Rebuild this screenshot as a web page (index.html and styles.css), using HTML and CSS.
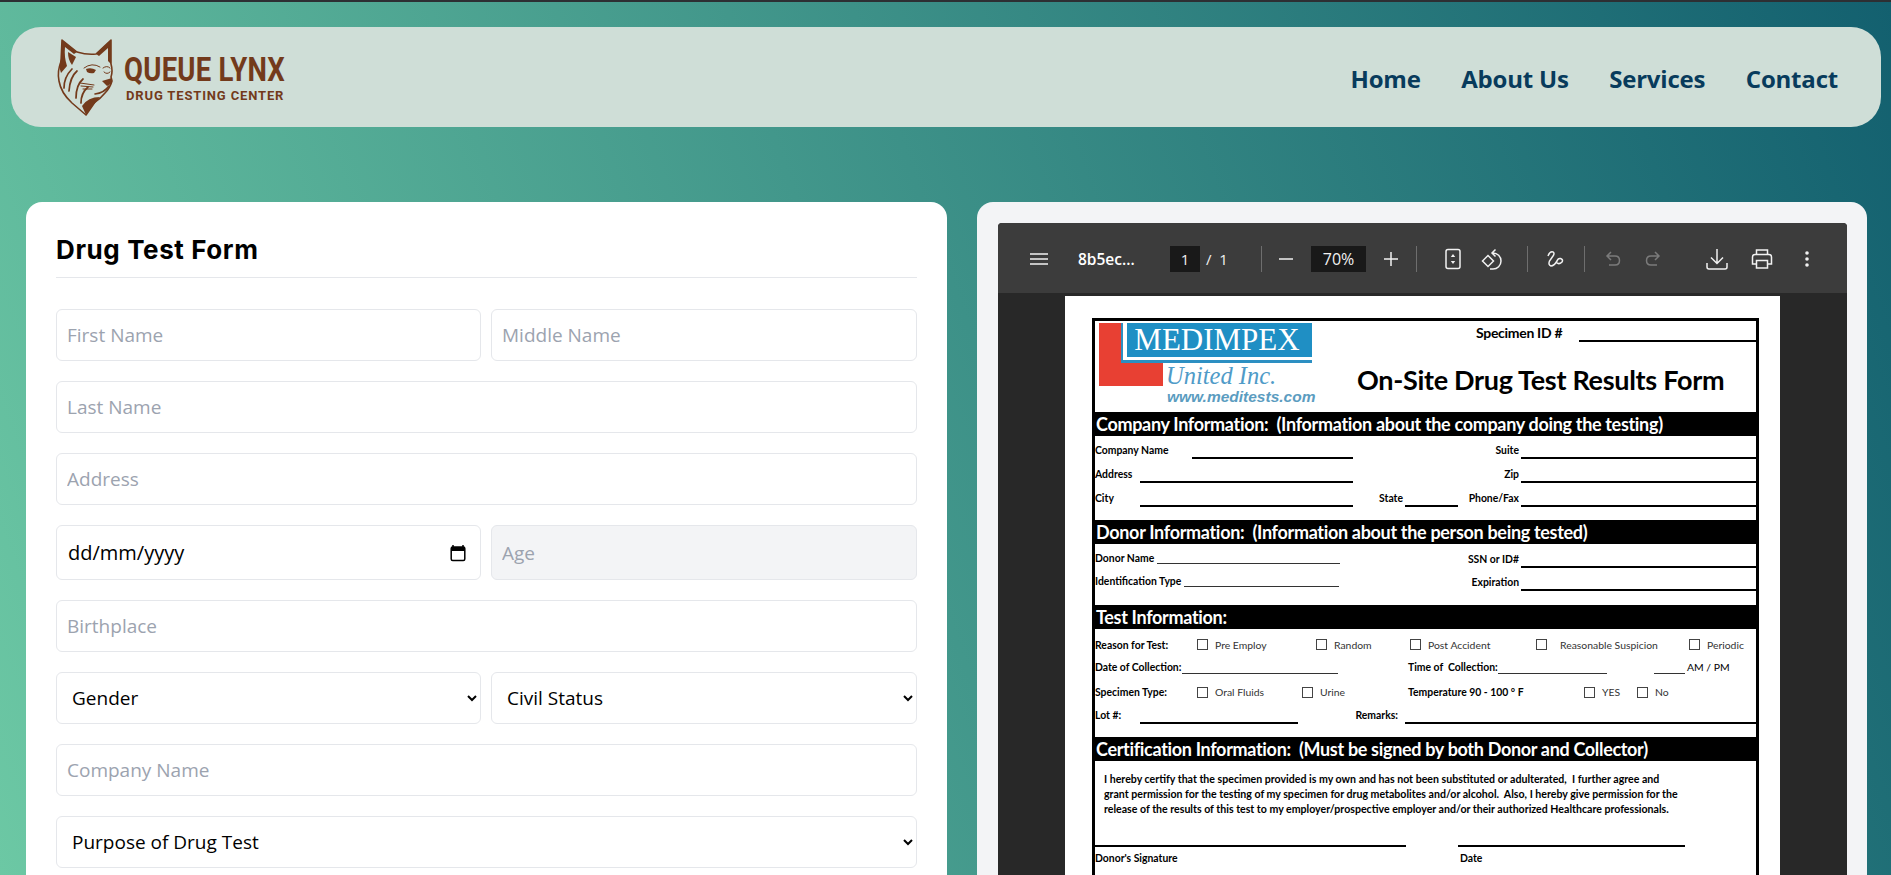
FILE: index.html
```html
<!DOCTYPE html>
<html lang="en">
<head>
    <meta charset="UTF-8">
    <meta name="viewport" content="width=device-width, initial-scale=1.0">
    <title>Queue Lynx Drug Testing Center</title>
    <link rel="stylesheet" href="styles.css">
</head>
<body>
    <header class="navbar">
        <a class="brand" href="#">
            <svg class="brand-mark" viewBox="0 0 70 86" width="70" height="86">
                <path class="lynx-line" d="M12 5 L27 17 Q37 20 46 19 L61 5 L61 29 Q63 36 61 42 L62 46 Q60 53 55 58 Q50 64 45 67 L36 80 L22 68 Q11 58 9 46 Q7 36 11 27 Z"/>
                <path class="lynx-fill" d="M12 5 L27 17 L24 19 L15 12 Q14 22 17 31 L11 38 Q8 30 11 24 Z"/>
                <path class="lynx-fill" d="M18 17 L26 22 L22 30 Q18 25 18 17 Z"/>
                <path class="lynx-fill" d="M61 5 L61 29 L58 26 L58 13 L49 21 L46 19 Z"/>
                <path class="lynx-stroke" d="M27 36 Q20 42 19 56 M22 34 Q14 42 14 53 M33 44 Q26 50 26 63 M38 52 Q31 58 31 68"/>
                <path class="lynx-stroke thin" d="M30 48 L44 50 M31 51 L43 52 M33 54 L42 54"/>
                <path class="lynx-fill" d="M36 34 Q41 32 46 35 L44 38 Q40 39 37 37 Z"/>
                <path class="lynx-stroke thin" d="M34 33 Q42 27 50 32 M53 33 Q57 30 60 33 M54 37 Q57 40 60 37"/>
                <path class="lynx-fill" d="M52 46 L62 43 L61 49 L57 51 Z"/>
                <path class="lynx-stroke" d="M45 59 Q54 58 59 51"/>
                <path class="lynx-fill" d="M32 71 Q38 62 50 62 Q46 68 42 71 L36 80 Z"/>
            </svg>
            <span class="brand-text">
                <span class="brand-name">QUEUE LYNX</span>
                <span class="brand-sub">DRUG TESTING CENTER</span>
            </span>
        </a>
        <nav class="nav-links">
            <a href="#">Home</a>
            <a href="#">About Us</a>
            <a href="#">Services</a>
            <a href="#">Contact</a>
        </nav>
    </header>

    <main class="content">
        <section class="card form-card">
            <h1 class="form-title">Drug Test Form</h1>
            <form class="form-fields">
                <div class="field-row">
                    <input class="field" type="text" placeholder="First Name">
                    <input class="field" type="text" placeholder="Middle Name">
                </div>
                <input class="field" type="text" placeholder="Last Name">
                <input class="field" type="text" placeholder="Address">
                <div class="field-row">
                    <div class="field date-field">
                        <span>dd/mm/yyyy</span>
                        <svg viewBox="0 0 16 18" width="16" height="18">
                            <path d="M3 1v2M13 1v2" class="cal-line"/>
                            <rect x="1.2" y="3" width="13.6" height="13.5" rx="1.5" class="cal-line"/>
                            <rect x="1.2" y="3" width="13.6" height="4" class="cal-top"/>
                        </svg>
                    </div>
                    <input class="field field-disabled tall" type="text" placeholder="Age" disabled>
                </div>
                <input class="field" type="text" placeholder="Birthplace">
                <div class="field-row">
                    <select class="field select"><option>Gender</option></select>
                    <select class="field select"><option>Civil Status</option></select>
                </div>
                <input class="field" type="text" placeholder="Company Name">
                <select class="field select"><option>Purpose of Drug Test</option></select>
            </form>
        </section>

        <section class="card preview-card">
            <div class="viewer">
                <div class="toolbar">
                    <button class="tb-btn tb-menu" type="button">
                        <svg viewBox="0 0 18 14" width="18" height="14"><path d="M0 2h18M0 7h18M0 12h18"/></svg>
                    </button>
                    <span class="tb-title">8b5ec...</span>
                    <span class="tb-box tb-page">1</span>
                    <span class="tb-count">/&nbsp;&nbsp;1</span>
                    <span class="tb-sep"></span>
                    <button class="tb-btn tb-minus" type="button">
                        <svg viewBox="0 0 14 14" width="14" height="14"><path d="M0 7h14"/></svg>
                    </button>
                    <span class="tb-box tb-zoom">70%</span>
                    <button class="tb-btn tb-plus" type="button">
                        <svg viewBox="0 0 14 14" width="14" height="14"><path d="M0 7h14M7 0v14"/></svg>
                    </button>
                    <span class="tb-sep tb-sep-a"></span>
                    <button class="tb-btn tb-fit" type="button">
                        <svg viewBox="0 0 16 22" width="16" height="22">
                            <rect x="1" y="1.5" width="14" height="19" rx="2"/>
                            <path class="solid" d="M8 6l2.2 3h-4.4zM8 16l-2.2-3h4.4z"/>
                        </svg>
                    </button>
                    <button class="tb-btn tb-rotate" type="button">
                        <svg viewBox="0 0 22 22" width="22" height="22">
                            <path d="M1.5 13l5.5-5.5 5.5 5.500-5.500 5.500z"/>
                            <path d="M14.5 1.5L11 5l3.5 3.5M11 5h1a8 8 0 0 1 0 16h-3"/>
                        </svg>
                    </button>
                    <span class="tb-sep tb-sep-b"></span>
                    <button class="tb-btn tb-draw" type="button">
                        <svg viewBox="0 0 18 18" width="18" height="18">
                            <path d="M1 6Q3 1 6 2q2 1 0 4L2.5 11Q1 15 4 16q3 0 6-5 1-3 3.5-2.500 3 1 1.500 3.500-3 3-5.500 .5"/>
                        </svg>
                    </button>
                    <span class="tb-sep tb-sep-c"></span>
                    <button class="tb-btn tb-undo dim" type="button">
                        <svg viewBox="0 0 16 16" width="16" height="16"><path d="M6 1L2 5l4 4M2 5h8q4.500 0 4.500 4.500T10 14H4"/></svg>
                    </button>
                    <button class="tb-btn tb-redo dim" type="button">
                        <svg viewBox="0 0 16 16" width="16" height="16"><path d="M10 1l4 4-4 4M14 5H6Q1.500 5 1.500 9.500T6 14h6"/></svg>
                    </button>
                    <button class="tb-btn tb-save" type="button">
                        <svg viewBox="0 0 22 22" width="22" height="22"><path d="M11 1v14M5 9.500l6 6 6-6M1 15v4q0 2 2 2h16q2 0 2-2v-4"/></svg>
                    </button>
                    <button class="tb-btn tb-print" type="button">
                        <svg viewBox="0 0 22 20" width="22" height="20"><path d="M5.500 5.500V1h11v4.500M5.500 15H1.500V8q0-2.500 2.500-2.500h14q2.500 0 2.500 2.500v7h-4M5.500 11.500h11V19h-11z"/></svg>
                    </button>
                    <button class="tb-btn tb-more" type="button">
                        <svg viewBox="0 0 4 16" width="4" height="16"><circle class="solid" cx="2" cy="2" r="1.8"/><circle class="solid" cx="2" cy="8" r="1.8"/><circle class="solid" cx="2" cy="14" r="1.8"/></svg>
                    </button>
                </div>

                <div class="pdf-page">
                    <div class="doc">
                        <div class="doc-head">
                            <div class="med-logo">
                                <span class="med-red"></span>
                                <span class="med-rule"></span>
                                <span class="med-blue">MEDIMPEX</span>
                                <span class="med-united">United Inc.</span>
                                <span class="med-url">www.meditests.com</span>
                            </div>
                            <div class="doc-head-right">
                                <div class="specimen-row">
                                    <span class="specimen-label">Specimen ID #</span>
                                    <span class="line"></span>
                                </div>
                                <div class="doc-title">On-Site Drug Test Results Form</div>
                            </div>
                        </div>

                        <div class="band">Company Information:  (Information about the company doing the testing)</div>
                        <div class="row row-h23 cols-company-1">
                            <span class="lbl">Company Name</span><span class="line"></span><span class="lbl right">Suite</span><span class="line"></span>
                        </div>
                        <div class="row cols-company-2">
                            <span class="lbl">Address</span><span class="line"></span><span class="lbl right">Zip</span><span class="line"></span>
                        </div>
                        <div class="row cols-company-3">
                            <span class="lbl">City</span><span class="line"></span><span class="lbl right">State</span><span class="line"></span><span class="lbl right">Phone/Fax</span><span class="line"></span>
                        </div>

                        <div class="band band-gap">Donor Information:  (Information about the person being tested)</div>
                        <div class="row cols-donor-1">
                            <span class="lbl up">Donor Name</span><span class="line thin up"></span><span class="lbl right">SSN or ID#</span><span class="line"></span>
                        </div>
                        <div class="row row-h23 cols-donor-2">
                            <span class="lbl up">Identification Type</span><span class="line thin up"></span><span class="lbl right">Expiration</span><span class="line"></span>
                        </div>

                        <div class="band band-gap-14">Test Information:</div>
                        <div class="row row-h26 cols-reason">
                            <span class="lbl mid">Reason for Test:</span>
                            <span class="check"><i></i>Pre Employ</span>
                            <span class="check"><i></i>Random</span>
                            <span class="check"><i></i>Post Accident</span>
                            <span class="check wide"><i></i>Reasonable Suspicion</span>
                            <span class="check"><i></i>Periodic</span>
                        </div>
                        <div class="row row-h19 cols-collect">
                            <span class="lbl">Date of Collection:</span><span class="line thin"></span><span></span>
                            <span class="lbl">Time of  Collection:</span><span class="line thin"></span><span></span>
                            <span class="line thin"></span><span class="lbl plain ampm">AM / PM</span>
                        </div>
                        <div class="row row-h29 cols-specimen">
                            <span class="lbl mid">Specimen Type:</span>
                            <span class="check"><i></i>Oral Fluids</span>
                            <span class="check"><i></i>Urine</span>
                            <span class="lbl mid">Temperature 90 - 100 ° F</span>
                            <span class="check"><i></i>YES</span>
                            <span class="check"><i></i>No</span>
                        </div>
                        <div class="row row-h21 cols-lot">
                            <span class="lbl">Lot #:</span><span class="line"></span><span class="lbl right pad7">Remarks:</span><span class="line"></span>
                        </div>

                        <div class="band band-gap">Certification Information:  (Must be signed by both Donor and Collector)</div>
                        <p class="cert">I hereby certify that the specimen provided is my own and has not been substituted or adulterated,  I further agree and
grant permission for the testing of my specimen for drug metabolites and/or alcohol.  Also, I hereby give permission for the
release of the results of this test to my employer/prospective employer and/or their authorized Healthcare professionals.</p>
                        <div class="row row-h31 cols-sign">
                            <span class="line"></span><span></span><span class="line"></span>
                        </div>
                        <div class="row row-h19 row-sign-labels cols-sign">
                            <span class="lbl mid">Donor's Signature</span><span></span><span class="lbl mid date-lbl">Date</span>
                        </div>
                    </div>
                </div>
            </div>
        </section>
    </main>
</body>
</html>
```

FILE: styles.css
```css
* {
    box-sizing: border-box;
}
html, body {
    height: 875px;
    overflow: hidden;
}
body {
    margin: 0;
    border-top: 2px solid #2d2f33;
    background: linear-gradient(70deg, #6cc8a4 0%, #13606f 100%);
    font-family: "Open Sans", "Noto Sans", sans-serif;
}

/* navbar */
.navbar {
    display: flex;
    align-items: center;
    justify-content: space-between;
    height: 100px;
    margin: 25px 10px 0 11px;
    padding: 0 43px 0 39px;
    background: #cfded7;
    border-radius: 30px;
}
.brand {
    display: flex;
    align-items: center;
    text-decoration: none;
    color: #733a1b;
}
.brand-mark {
    margin-top: 1px;
}
.lynx-line {
    fill: none;
    stroke: #733a1b;
    stroke-width: 1.6;
    stroke-linejoin: round;
}
.lynx-fill {
    fill: #733a1b;
}
.lynx-stroke {
    fill: none;
    stroke: #733a1b;
    stroke-width: 1.7;
    stroke-linecap: round;
}
.lynx-stroke.thin {
    stroke-width: 1;
}
.brand-text {
    display: flex;
    flex-direction: column;
    margin-left: 4px;
}
.brand-name {
    font-family: "Roboto", sans-serif;
    font-weight: 700;
    font-size: 34px;
    line-height: 34px;
    letter-spacing: 0.3px;
    white-space: nowrap;
    transform: scaleX(0.81);
    transform-origin: left center;
}
.brand-sub {
    font-family: "Roboto", sans-serif;
    font-weight: 700;
    font-size: 13px;
    line-height: 15px;
    letter-spacing: 0.85px;
    margin: 2px 0 0 2px;
}
.nav-links {
    display: flex;
    gap: 40.5px;
    margin-top: 2px;
}
.nav-links a {
    font-size: 24px;
    font-weight: 700;
    letter-spacing: -0.2px;
    color: #083b5c;
    text-decoration: none;
}

/* two columns */
.content {
    display: grid;
    grid-template-columns: 921px 890px;
    gap: 30px;
    padding: 75px 24px 0 26px;
}
.card {
    border-radius: 16px;
    height: 800px;
}
.form-card {
    background: #fff;
    padding: 31px 30px 30px;
}
.form-title {
    margin: 0 0 31px;
    padding-bottom: 10px;
    border-bottom: 1px solid #e5e7eb;
    font-family: "Inter", sans-serif;
    font-size: 26px;
    font-weight: 700;
    line-height: 34px;
    letter-spacing: 0.6px;
    color: #000;
}
.form-fields {
    display: flex;
    flex-direction: column;
    gap: 20px;
}
.field-row {
    display: grid;
    grid-template-columns: 425px 1fr;
    gap: 10px;
}
.field {
    width: 100%;
    height: 52px;
    padding: 0 10px;
    border: 1px solid #e5e7eb;
    border-radius: 6px;
    background: #fff;
    color: #000;
    font-family: inherit;
    font-size: 19px;
}
.field::placeholder {
    color: #9ca3af;
    opacity: 1;
}
.field-disabled {
    background: #f3f4f6;
}
.tall {
    height: 55px;
}
.date-field {
    display: flex;
    align-items: center;
    justify-content: space-between;
    height: 55px;
    padding: 0 14px 0 11px;
    font-size: 20px;
}
.cal-line {
    fill: none;
    stroke: #000;
    stroke-width: 1.5;
}
.cal-top {
    fill: #000;
}
.select {
    padding-left: 11px;
}

/* pdf viewer */
.preview-card {
    background: #f3f4f6;
    padding: 21px 20px 0 21px;
}
.viewer {
    background: #282828;
    border-radius: 4px 4px 0 0;
    height: 780px;
    overflow: hidden;
}
.toolbar {
    display: flex;
    align-items: center;
    height: 70px;
    padding: 2px 0 0 25px;
    background: #3c3c3c;
    color: #f1f1f1;
    font-family: "Open Sans", sans-serif;
    font-size: 15px;
}
.tb-btn {
    display: flex;
    align-items: center;
    justify-content: center;
    width: 32px;
    height: 32px;
    padding: 0;
    border: 0;
    background: none;
}
.tb-btn svg {
    fill: none;
    stroke: #f1f1f1;
    stroke-width: 1.5;
}
.tb-btn svg .solid {
    fill: #f1f1f1;
    stroke: none;
}
.tb-btn.dim svg {
    stroke: #7b7b7b;
}
.tb-title {
    width: 92px;
    margin-left: 23px;
    font-size: 15.5px;
    font-weight: 600;
    color: #fff;
}
.tb-box {
    height: 26px;
    line-height: 26px;
    background: #191919;
    text-align: center;
}
.tb-page {
    width: 30px;
}
.tb-count {
    width: 61px;
    padding-left: 6px;
}
.tb-zoom {
    width: 55px;
    margin-left: 9px;
    font-size: 16px;
}
.tb-sep {
    width: 1px;
    height: 26px;
    background: #6e6e6e;
}
.tb-minus { margin-left: 8px; }
.tb-plus { margin-left: 9px; }
.tb-sep-a { margin-left: 9px; }
.tb-fit { margin-left: 20px; }
.tb-rotate { margin-left: 7px; }
.tb-sep-b { margin-left: 19px; }
.tb-draw { margin-left: 12px; }
.tb-sep-c { margin-left: 12px; }
.tb-undo { margin-left: 12px; }
.tb-redo { margin-left: 8px; }
.tb-save { margin-left: 32px; }
.tb-print { margin-left: 13px; }
.tb-more { margin-left: 13px; }

/* the scanned form */
.pdf-page {
    width: 715px;
    height: 700px;
    margin: 3px auto 0;
    padding: 22px 0 0 27px;
    background: #fff;
}
.doc {
    width: 667px;
    height: 700px;
    border: 3px solid #000;
    border-bottom: 0;
    color: #000;
    font-family: "Lato", "Liberation Sans", sans-serif;
    font-size: 10.4px;
}
.doc-head {
    display: flex;
    height: 91px;
}
.med-logo {
    position: relative;
    flex: none;
    width: 223px;
    height: 84px;
    margin: 2px 0 0 4px;
    color: #4f9bc8;
}
.med-red {
    position: absolute;
    left: 0;
    top: 0;
    width: 64px;
    height: 63px;
    background: #e84033;
    clip-path: polygon(0 0, 22px 0, 22px 40px, 64px 40px, 64px 63px, 0 63px);
}
.med-rule {
    position: absolute;
    left: 22px;
    top: 0;
    width: 191px;
    height: 40px;
    border-left: 2px solid #2c8fc2;
    border-bottom: 3px solid #2c8fc2;
}
.med-blue {
    position: absolute;
    left: 28px;
    top: 0;
    width: 185px;
    height: 34px;
    padding-right: 5px;
    background: #1f8fc4;
    color: #fff;
    font-family: "Liberation Serif", serif;
    font-size: 31px;
    line-height: 34px;
    text-align: center;
}
.med-united {
    position: absolute;
    left: 67px;
    top: 39px;
    font-family: "Liberation Serif", serif;
    font-style: italic;
    font-size: 24.5px;
    line-height: 28px;
    white-space: nowrap;
}
.med-url {
    position: absolute;
    left: 68px;
    top: 65px;
    font-family: "Liberation Sans", sans-serif;
    font-style: italic;
    font-weight: 700;
    font-size: 15.5px;
    line-height: 18px;
    color: #5b9cc0;
    white-space: nowrap;
}
.doc-head-right {
    flex: 1;
}
.specimen-row {
    display: grid;
    grid-template-columns: 103px 1fr;
    height: 21px;
    padding-left: 154px;
    align-items: end;
}
.specimen-label {
    font-size: 14px;
    font-weight: 700;
    line-height: 18px;
    letter-spacing: -0.3px;
    white-space: nowrap;
}
.doc-title {
    margin: 24px 0 0 35px;
    font-size: 27px;
    font-weight: 700;
    line-height: 28px;
    letter-spacing: -0.3px;
    white-space: nowrap;
}
.band {
    height: 24px;
    padding-left: 1px;
    background: #000;
    color: #fff;
    font-size: 18px;
    font-weight: 700;
    line-height: 24px;
    letter-spacing: -0.32px;
    white-space: pre;
}
.band-gap { margin-top: 13px; }
.band-gap-14 { margin-top: 14px; }
.row {
    display: grid;
    height: 24px;
    align-items: end;
}
.row-h19 { height: 19px; }
.row-h21 { height: 21px; }
.row-h23 { height: 23px; }
.row-h26 { height: 26px; padding-top: 5px; }
.row-h29 { height: 29px; padding-top: 7px; }
.row-h31 { height: 31px; }
.row-sign-labels { padding-top: 3px; }
.cols-company-1 { grid-template-columns: 97px 161px 1fr 235px; }
.cols-company-2 { grid-template-columns: 45px 213px 1fr 235px; }
.cols-company-3 { grid-template-columns: 45px 213px 52px 53px 1fr 235px; }
.cols-donor-1 { grid-template-columns: 62px 183px 1fr 235px; }
.cols-donor-2 { grid-template-columns: 89px 155px 1fr 235px; }
.cols-reason { grid-template-columns: 102px 119px 94px 126px 153px 1fr; }
.cols-collect { grid-template-columns: 87px 156px 70px 90px 109px 47px 31px 1fr; }
.cols-specimen { grid-template-columns: 102px 105px 106px 176px 53px 1fr; }
.cols-lot { grid-template-columns: 45px 158px 107px 1fr; }
.cols-sign { grid-template-columns: 311px 52px 227px; }
.lbl {
    padding-bottom: 3px;
    font-weight: 700;
    line-height: 12px;
    white-space: pre;
}
.cols-collect .lbl {
    padding-bottom: 1px;
}
.lbl.plain {
    font-weight: 400;
}
.lbl.right {
    padding-right: 2px;
    text-align: right;
}
.lbl.pad7 {
    padding-right: 7px;
}
.lbl.mid {
    align-self: center;
    padding-bottom: 0;
}
.ampm {
    padding-left: 2px;
}
.date-lbl {
    padding-left: 2px;
}
.line {
    display: block;
    height: 2px;
    background: #000;
}
.line.thin {
    height: 1.5px;
    background: #333;
}
.up {
    margin-bottom: 4px;
}
.lbl.up {
    padding-bottom: 0;
}
.check {
    display: flex;
    align-items: center;
    align-self: center;
    color: #333;
    white-space: nowrap;
}
.check i {
    flex: none;
    width: 11px;
    height: 11px;
    margin-right: 7px;
    border: 1px solid #444;
}
.check.wide i {
    margin-right: 13px;
}
.cert {
    margin: 0;
    padding: 11px 0 0 9px;
    height: 55px;
    font-size: 10.6px;
    font-weight: 700;
    line-height: 15px;
    white-space: pre;
}
```
